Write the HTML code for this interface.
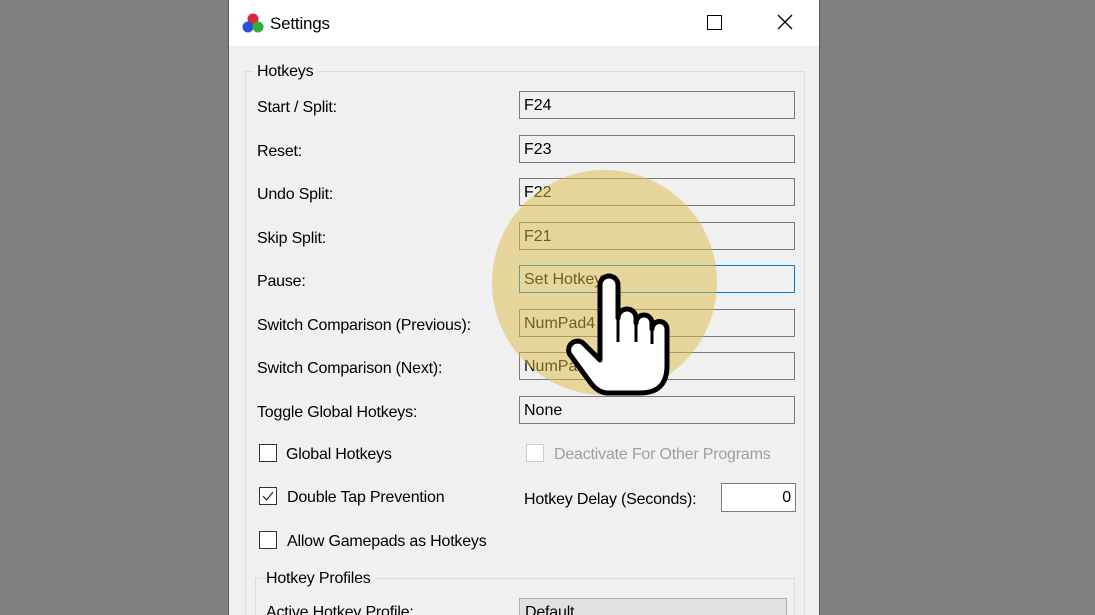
<!DOCTYPE html>
<html style="overflow:hidden;height:615px"><head><meta charset="utf-8"><style>
body{margin:0;width:1095px;height:615px;background:#808080;position:relative;overflow:hidden;font-family:"Liberation Sans",sans-serif;}
.win{position:absolute;left:228px;top:0;width:590px;height:615px;background:#f0f0f0;border-left:1px solid #5a5a5a;border-right:1px solid #5a5a5a;overflow:hidden;}
.title{position:absolute;left:0;top:0;width:590px;height:46px;background:#fff;}
.t{position:absolute;font-size:16px;color:#000;white-space:nowrap;letter-spacing:-0.2px}
.box{position:absolute;left:290px;width:274px;height:26px;border:1px solid #7a7a7a;background:#f0f0f0;}
.box span{position:absolute;left:4px;top:5px;font-size:16px;}
.cb{position:absolute;width:16px;height:16px;border:1px solid #333;background:#fff;}
.grp{position:absolute;border:1px solid #dcdcdc;}
</style></head><body>
<div class="win">
 <div class="title">
  <svg style="position:absolute;left:13px;top:12px" width="22" height="22"><circle cx="11" cy="7" r="5.5" fill="#d8283a"/><circle cx="6" cy="15" r="5.5" fill="#2a4fd8"/><circle cx="16" cy="15" r="5.5" fill="#2fae3a"/></svg>
  <div class="t" style="left:41px;top:14px;font-size:17px">Settings</div>
  <div style="position:absolute;left:478px;top:15px;width:13px;height:13px;border:1.5px solid #000"></div>
  <svg style="position:absolute;left:548px;top:14px" width="16" height="16"><path d="M1,1L15,15M15,1L1,15" stroke="#000" stroke-width="1.3"/></svg>
 </div>
 <div class="grp" style="left:16px;top:71px;width:558px;height:560px"></div>
 <div class="t" style="left:24px;top:63px;background:#f0f0f0;padding:0 4px">Hotkeys</div>
 <div class="t" style="left:28px;top:99px">Start / Split:</div>
 <div class="t" style="left:28px;top:143px">Reset:</div>
 <div class="t" style="left:28px;top:186px">Undo Split:</div>
 <div class="t" style="left:28px;top:230px">Skip Split:</div>
 <div class="t" style="left:28px;top:273px">Pause:</div>
 <div class="t" style="left:28px;top:317px">Switch Comparison (Previous):</div>
 <div class="t" style="left:28px;top:360px">Switch Comparison (Next):</div>
 <div class="t" style="left:28px;top:404px">Toggle Global Hotkeys:</div>
 <div class="box" style="top:91px"><span>F24</span></div>
 <div class="box" style="top:135px"><span>F23</span></div>
 <div class="box" style="top:178px"><span>F22</span></div>
 <div class="box" style="top:222px"><span>F21</span></div>
 <div class="box" style="top:265px;border-color:#0078d7"><span>Set Hotkey...</span></div>
 <div class="box" style="top:309px"><span>NumPad4</span></div>
 <div class="box" style="top:352px"><span>NumPad6</span></div>
 <div class="box" style="top:396px"><span>None</span></div>
 <div class="cb" style="left:30px;top:444px"></div><div class="t" style="left:57px;top:446px">Global Hotkeys</div>
 <div class="cb" style="left:297px;top:444px;border-color:#ccc"></div><div class="t" style="left:325px;top:446px;color:#a0a0a0">Deactivate For Other Programs</div>
 <div class="cb" style="left:30px;top:487px"><svg width="16" height="16"><path d="M3,8L6.5,12L13,4" stroke="#333" stroke-width="1.3" fill="none"/></svg></div><div class="t" style="left:58px;top:489px">Double Tap Prevention</div>
 <div class="t" style="left:295px;top:491px">Hotkey Delay (Seconds):</div>
 <div style="position:absolute;left:492px;top:483px;width:73px;height:27px;border:1px solid #7a7a7a;background:#fff"><span class="t" style="right:4px;top:5px">0</span></div>
 <div class="cb" style="left:30px;top:531px"></div><div class="t" style="left:58px;top:533px">Allow Gamepads as Hotkeys</div>
 <div class="grp" style="left:26px;top:578px;width:538px;height:60px"></div>
 <div class="t" style="left:33px;top:570px;background:#f0f0f0;padding:0 4px">Hotkey Profiles</div>
 <div class="t" style="left:37px;top:604px">Active Hotkey Profile:</div>
 <div style="position:absolute;left:290px;top:598px;width:266px;height:26px;border:1px solid #adadad;background:#e1e1e1"><span class="t" style="left:5px;top:5px">Default</span></div>
</div>
<div style="position:absolute;left:492px;top:170px;width:225px;height:225px;border-radius:50%;background:rgba(222,188,70,0.5)"></div>
<svg style="position:absolute;left:0;top:0" width="1095" height="615">
<path d="M600,285 a9,9 0 0 1 18,0 L618,318 a9,9 0 0 1 18,0 L636,323 a8,8 0 0 1 16,0 L652,329 a7.5,7.5 0 0 1 15,0 L667,366 Q667,393 640,393 L608,393 Q598,393 590,382 L571,356 a8,8 0 0 1 13,-12 L600,360 Z" fill="#fff" stroke="#000" stroke-width="5" stroke-linejoin="round"/>
<path d="M618,320L618,342M636,325L636,342M652,331L652,344" stroke="#000" stroke-width="3"/>
</svg>
</body></html>
